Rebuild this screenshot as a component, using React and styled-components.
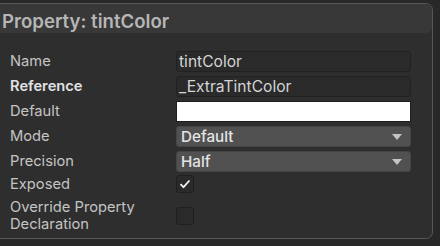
import React from "react";
import styled, { createGlobalStyle } from "styled-components";

const Global = createGlobalStyle`
  html, body { margin: 0; padding: 0; background: #282828; overflow: hidden; }
  body { font-family: Inter, "Noto Sans", sans-serif; }
`;

const Panel = styled.div`
  box-sizing: border-box;
  margin: 3px 0 0 -6px;
  width: 439px;
  height: 236px;
  background: #2e2e2e;
  border: 1px solid #565656;
  border-radius: 0 7px 7px 0;
  overflow: hidden;
`;

const Header = styled.div`
  box-sizing: border-box;
  height: 29px;
  background: #383838;
  border-radius: 0 6px 6px 0;
  padding: 7px 0 0 7px;
  line-height: 20px;
  font-size: 18.6px;
  font-weight: 600;
  color: #b6b6b6;
`;

const Body = styled.div`
  display: flex;
  flex-direction: column;
  padding: 18px 0 0 15px;
`;

const Row = styled.div`
  display: grid;
  grid-template-columns: 166px 235px;
  align-items: center;
  height: ${(p) => p.$h || 21}px;
  margin-top: ${(p) => p.$gap ?? 4}px;
`;

const Label = styled.div`
  font-size: 14.7px;
  line-height: 17px;
  color: ${(p) => (p.$strong ? "#e2e2e2" : "#c4c4c4")};
  font-weight: ${(p) => (p.$strong ? 600 : 400)};
`;

const Field = styled.div`
  box-sizing: border-box;
  height: 21px;
  background: #2a2a2a;
  border: 1px solid #212121;
  border-radius: 3px;
  display: flex;
  align-items: center;
  padding-left: 2px;
  font-size: 15.6px;
  color: #d4d4d4;
`;

const ColorSwatch = styled.div`
  box-sizing: border-box;
  height: 21px;
  background: #ffffff;
  border: 1px solid #1e1e1e;
`;

const Dropdown = styled.div`
  box-sizing: border-box;
  height: 21px;
  background: #515151;
  border: 1px solid #454545;
  border-radius: 3px;
  display: flex;
  align-items: center;
  justify-content: space-between;
  padding: 0 8px 0 4px;
  font-size: 15.2px;
  font-weight: 500;
  color: #e4e4e4;
`;

const Arrow = styled.span`
  width: 0;
  height: 0;
  border-left: 5px solid transparent;
  border-right: 5px solid transparent;
  border-top: 6px solid #c4c4c4;
`;

const Check = styled.div`
  box-sizing: border-box;
  width: 18px;
  height: 18px;
  background: #2a2a2a;
  border: 1px solid #1f1f1f;
  border-radius: 3px;
  display: flex;
  align-items: center;
  justify-content: center;
`;

export default function App() {
  return (
    <>
      <Global />
      <Panel>
        <Header>Property: tintColor</Header>
        <Body>
          <Row $gap={0}>
            <Label>Name</Label>
            <Field>tintColor</Field>
          </Row>
          <Row>
            <Label $strong>Reference</Label>
            <Field>_ExtraTintColor</Field>
          </Row>
          <Row>
            <Label>Default</Label>
            <ColorSwatch />
          </Row>
          <Row>
            <Label>Mode</Label>
            <Dropdown>
              Default
              <Arrow />
            </Dropdown>
          </Row>
          <Row>
            <Label>Precision</Label>
            <Dropdown>
              Half
              <Arrow />
            </Dropdown>
          </Row>
          <Row $h={18} $gap={3}>
            <Label>Exposed</Label>
            <Check>
              <svg width="12" height="10" viewBox="0 0 12 10">
                <path d="M1.5 5.2 L4.5 8.2 L10.5 1.5" fill="none" stroke="#f0f0f0" strokeWidth="1.8" />
              </svg>
            </Check>
          </Row>
          <Row $h={35} $gap={5}>
            <Label>
              Override Property
              <br />
              Declaration
            </Label>
            <Check />
          </Row>
        </Body>
      </Panel>
    </>
  );
}
